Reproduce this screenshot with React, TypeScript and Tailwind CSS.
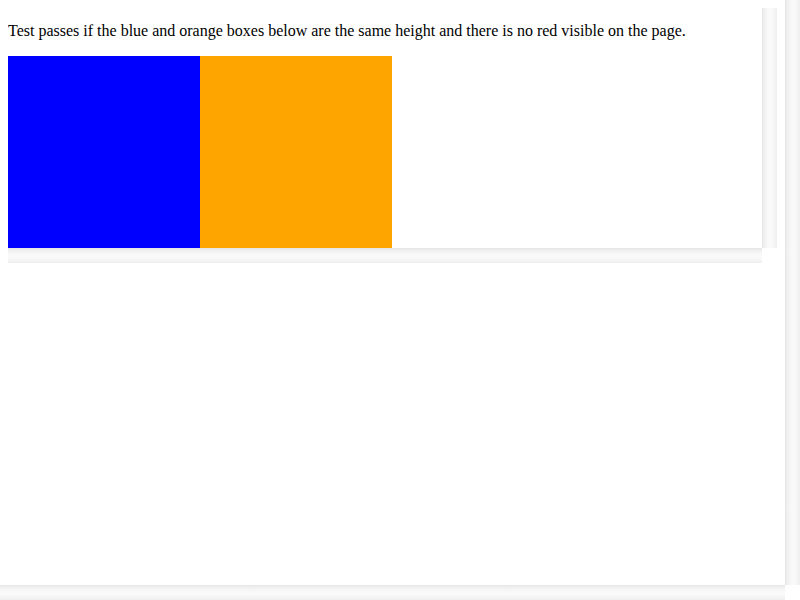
import React from "react";

const vbar = "bg-[linear-gradient(to_right,#e4e4e4_0px,#efefef_2px,#f8f8f8_6px,#fafafa_9px,#f3f3f3_13px,#eeeeee_15px)]";
const hbar = "bg-[linear-gradient(to_bottom,#e4e4e4_0px,#efefef_2px,#f8f8f8_6px,#fafafa_9px,#f3f3f3_13px,#eeeeee_15px)]";

export default function App() {
  return (
    <div
      className="w-[800px] h-[600px] grid grid-cols-[785px_15px] grid-rows-[585px_15px] bg-white overflow-hidden"
      style={{ fontFamily: '"Liberation Serif", "Times New Roman", serif' }}
    >
      <div className="p-2 overflow-hidden">
        <div className="w-[769px] h-[255px] grid grid-cols-[754px_15px] grid-rows-[240px_15px] bg-white">
          <div className="pt-[14px] overflow-hidden">
            <p className="text-[16px] leading-[18px] text-black mb-4 whitespace-nowrap">
              Test passes if the blue and orange boxes below are the same height and there is no red visible on the page.
            </p>
            <div className="flex">
              <div className="w-[192px] h-[192px] bg-[#0000ff]" />
              <div className="w-[192px] h-[192px] bg-[#ffa500]" />
            </div>
          </div>
          <div className={vbar} />
          <div className={hbar} />
          <div className="bg-white" />
        </div>
      </div>
      <div className={vbar} />
      <div className={hbar} />
      <div className="bg-white" />
    </div>
  );
}
